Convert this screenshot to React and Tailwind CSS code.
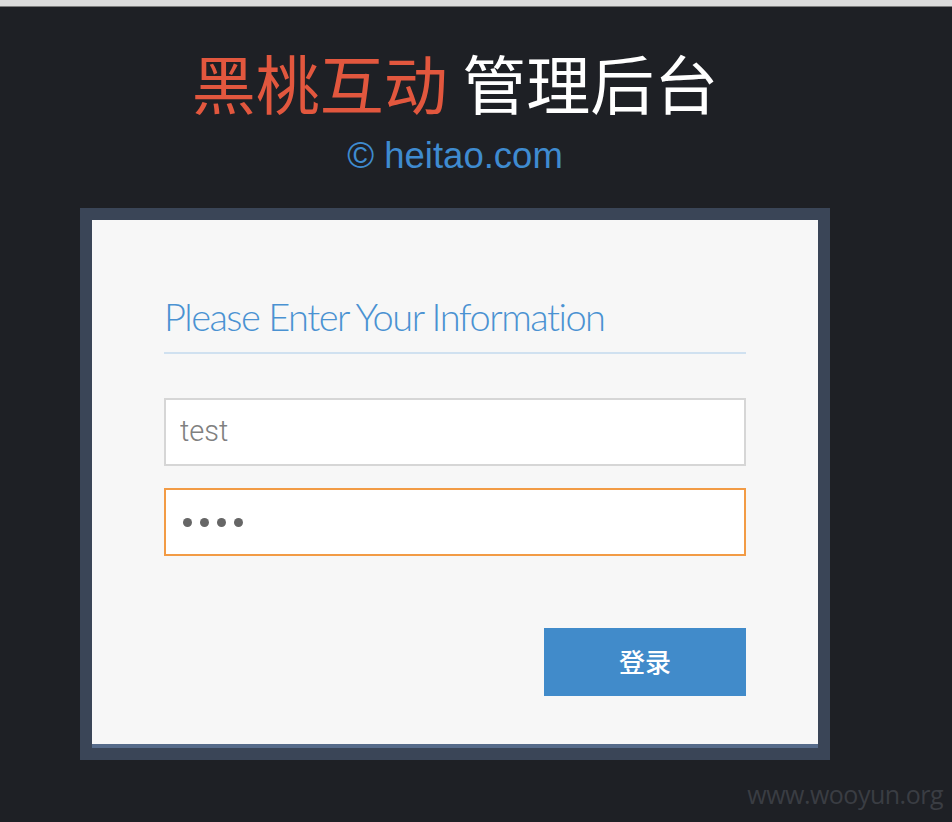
const cjk = { fontFamily: '"Noto Sans CJK SC", "Noto Sans", sans-serif' };

export default function App() {
  return (
    <div className="relative h-[822px] w-[952px] overflow-hidden bg-[#1e2025]">
      <div className="h-[7px] border-b border-[#7d7d7d] bg-[#dcdcdc]" />

      <div className="ml-[80px] w-[750px]">
        <h1 className="mt-[42px] text-center text-[64px] leading-[64px] font-normal text-white" style={cjk}>
          <span className="text-[#e2573e]">黑桃互动</span> 管理后台
        </h1>
        <p className="mt-[24px] text-center font-['Liberation_Sans',sans-serif] text-[36.5px] leading-[37px] text-[#3f8bd0]">
          © heitao.com
        </p>

        <div className="mt-[34px] bg-[#3a4557] p-[12px]">
          <form className="border-b-4 border-[#566b8a] bg-[#f7f7f7] px-[72px] pt-[77px] pb-[48px]" onSubmit={(e) => e.preventDefault()}>
            <h2 className="border-b-2 border-[#d0e1f0] pb-[17px] font-['Lato',sans-serif] text-[38px] leading-[38px] font-light tracking-[-1.5px] text-[#4a92d2]">
              Please Enter Your Information
            </h2>
            <input
              readOnly
              value="test"
              className="mt-[44px] block h-[68px] w-full border-2 border-[#d6d6d6] bg-white px-[14px] pb-[2px] font-['Roboto',sans-serif] text-[29px] font-light text-[#808080] outline-none"
            />
            <div className="mt-[22px] flex h-[68px] w-full items-center gap-[8px] border-2 border-[#f29b45] bg-white pt-[1px] pl-[17px]">
              <span className="h-[9px] w-[9px] rounded-full bg-[#666]" />
              <span className="h-[9px] w-[9px] rounded-full bg-[#666]" />
              <span className="h-[9px] w-[9px] rounded-full bg-[#666]" />
              <span className="h-[9px] w-[9px] rounded-full bg-[#666]" />
            </div>
            <div className="mt-[72px] flex justify-end">
              <button type="submit" className="h-[68px] w-[202px] bg-[#418bca] pb-[3px] text-[26px] font-medium text-white" style={cjk}>
                登录
              </button>
            </div>
          </form>
        </div>
      </div>

      <div className="absolute right-[9px] bottom-[14px] font-['Open_Sans',sans-serif] text-[25px] leading-[27px] tracking-[-0.5px] text-[#3a3d43]">
        www.wooyun.org
      </div>
    </div>
  );
}
